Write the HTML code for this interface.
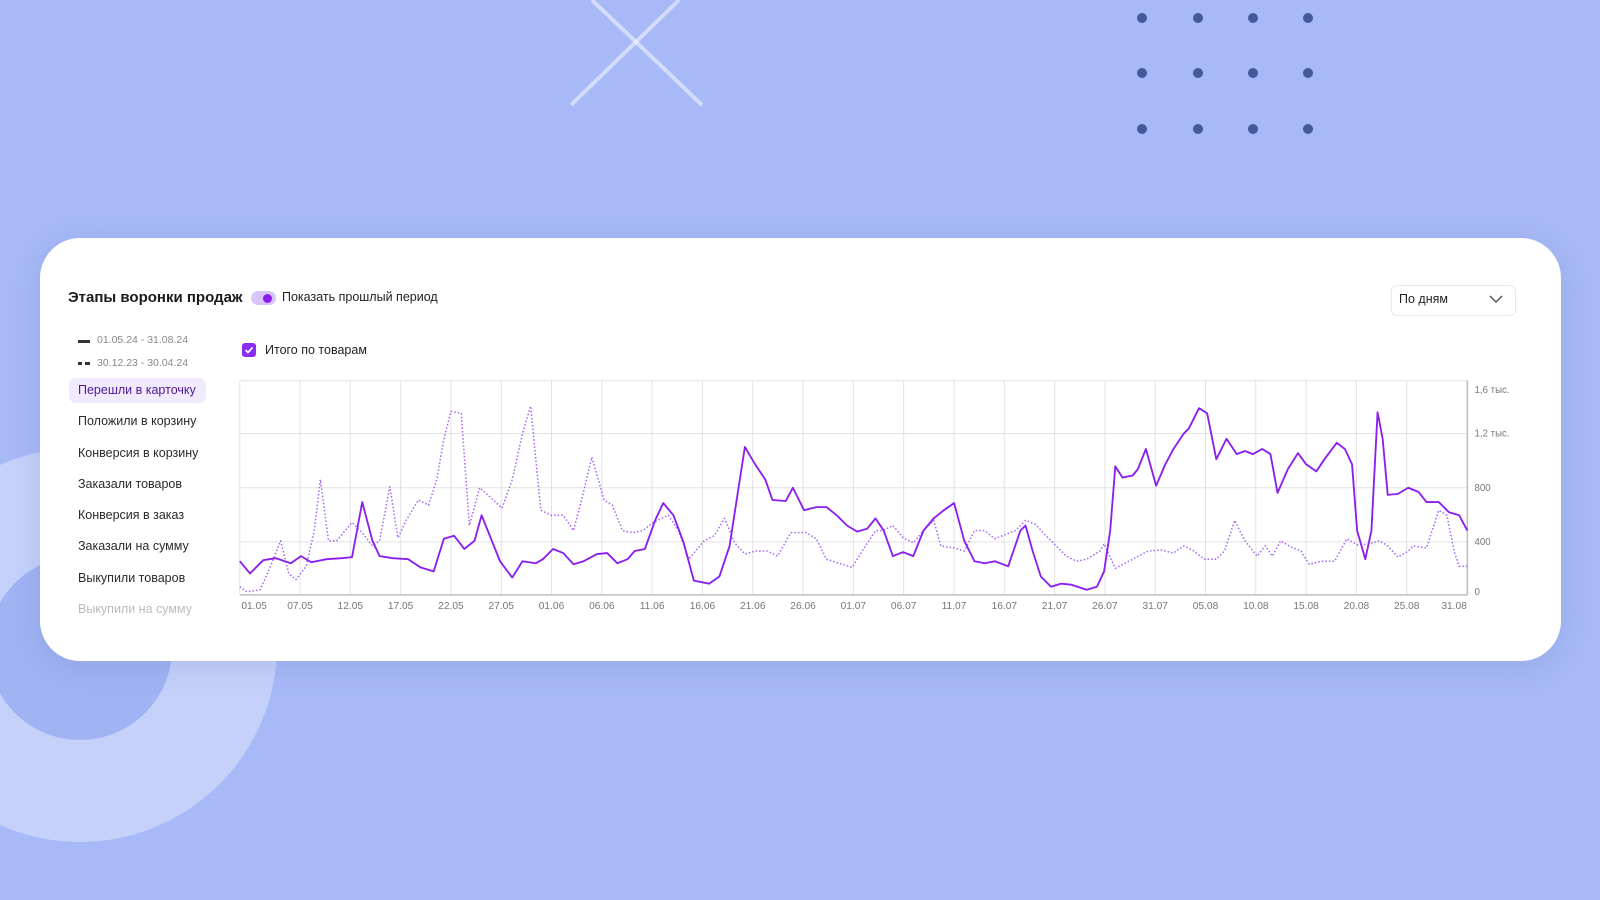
<!DOCTYPE html>
<html><head><meta charset="utf-8">
<style>
html,body{margin:0;padding:0;width:1600px;height:900px;overflow:hidden;background:#a7b9f6;font-family:"Liberation Sans","DejaVu Sans",sans-serif;}
.abs{position:absolute}
.card{position:absolute;left:40px;top:238px;width:1521px;height:423px;background:#fff;border-radius:40px;box-shadow:0 6px 30px rgba(80,100,180,.18);}
.t{position:absolute;white-space:nowrap;color:#222;}
.menu{font-size:12.5px;color:#2a2a2a;left:78px}
</style></head><body>
<svg class="abs" style="left:0;top:0" width="1600" height="900" viewBox="0 0 1600 900">
  <circle cx="80" cy="645" r="197" fill="rgba(255,255,255,0.35)"/>
  <circle cx="80" cy="648" r="92" fill="#a0b3f2"/>
  <line x1="571" y1="105" x2="679" y2="0" stroke="rgba(255,255,255,0.5)" stroke-width="4"/>
  <line x1="592" y1="0" x2="702" y2="105" stroke="rgba(255,255,255,0.5)" stroke-width="4"/>
  <g fill="#44589a">
    <circle cx="1142" cy="18" r="5"/><circle cx="1198" cy="18" r="5"/><circle cx="1253" cy="18" r="5"/><circle cx="1308" cy="18" r="5"/>
    <circle cx="1142" cy="73" r="5"/><circle cx="1198" cy="73" r="5"/><circle cx="1253" cy="73" r="5"/><circle cx="1308" cy="73" r="5"/>
    <circle cx="1142" cy="129" r="5"/><circle cx="1198" cy="129" r="5"/><circle cx="1253" cy="129" r="5"/><circle cx="1308" cy="129" r="5"/>
  </g>
</svg>
<div class="card"></div>
<div class="t" style="left:68px;top:289px;font-size:15px;font-weight:bold;color:#1a1a1a">Этапы воронки продаж</div>
<div class="abs" style="left:251px;top:291px;width:25px;height:14px;border-radius:7px;background:#d9c5fb"></div>
<div class="abs" style="left:263px;top:294px;width:9px;height:9px;border-radius:50%;background:#8a1df0"></div>
<div class="t" style="left:282px;top:290px;font-size:12.5px">Показать прошлый период</div>
<div class="abs" style="left:1391px;top:285px;width:123px;height:29px;border:1px solid #e8e8ee;border-radius:6px;background:#fff"></div>
<div class="t" style="left:1399px;top:292px;font-size:12.5px">По дням</div>
<svg class="abs" style="left:1489px;top:294px" width="14" height="10" viewBox="0 0 14 10"><path d="M1 2 L7 8 L13 2" fill="none" stroke="#555" stroke-width="1.5"/></svg>
<div class="abs" style="left:78px;top:340px;width:12px;height:3px;background:#333"></div>
<div class="t" style="left:97px;top:334px;font-size:10.5px;color:#888">01.05.24 - 31.08.24</div>
<div class="abs" style="left:78px;top:362px;width:4px;height:3px;background:#333"></div>
<div class="abs" style="left:85px;top:362px;width:5px;height:3px;background:#333"></div>
<div class="t" style="left:97px;top:357px;font-size:10.5px;color:#888">30.12.23 - 30.04.24</div>
<div class="abs" style="left:69px;top:378px;width:137px;height:25px;border-radius:7px;background:#f1eafd"></div>
<div class="t menu" style="top:383px;color:#4b1a93">Перешли в карточку</div>
<div class="t menu" style="top:414px">Положили в корзину</div>
<div class="t menu" style="top:446px">Конверсия в корзину</div>
<div class="t menu" style="top:477px">Заказали товаров</div>
<div class="t menu" style="top:508px">Конверсия в заказ</div>
<div class="t menu" style="top:539px">Заказали на сумму</div>
<div class="t menu" style="top:571px">Выкупили товаров</div>
<div class="t menu" style="top:602px;color:#bbb">Выкупили на сумму</div>
<div class="abs" style="left:242px;top:343px;width:14px;height:14px;border-radius:3px;background:#8a2cf5"></div>
<svg class="abs" style="left:242px;top:343px" width="14" height="14" viewBox="0 0 14 14"><path d="M3.5 7 L6 9.5 L10.5 4.5" fill="none" stroke="#fff" stroke-width="1.8"/></svg>
<div class="t" style="left:265px;top:343px;font-size:12.5px">Итого по товарам</div>

<svg class="abs" style="left:0;top:0" width="1600" height="900" viewBox="0 0 1568 882">
 <g stroke="#e2e2e2" stroke-width="1">
  <line x1="235" y1="373" x2="1438" y2="373"/><line x1="235" y1="425" x2="1438" y2="425"/><line x1="235" y1="478" x2="1438" y2="478"/><line x1="235" y1="531" x2="1438" y2="531"/>
  <line x1="235" y1="373" x2="235" y2="583"/>
  <line x1="294" y1="373" x2="294" y2="583"/><line x1="343.3" y1="373" x2="343.3" y2="583"/><line x1="392.6" y1="373" x2="392.6" y2="583"/><line x1="441.9" y1="373" x2="441.9" y2="583"/><line x1="491.2" y1="373" x2="491.2" y2="583"/><line x1="540.5" y1="373" x2="540.5" y2="583"/><line x1="589.8" y1="373" x2="589.8" y2="583"/><line x1="639.1" y1="373" x2="639.1" y2="583"/><line x1="688.4" y1="373" x2="688.4" y2="583"/><line x1="737.7" y1="373" x2="737.7" y2="583"/><line x1="787" y1="373" x2="787" y2="583"/><line x1="836.3" y1="373" x2="836.3" y2="583"/><line x1="885.6" y1="373" x2="885.6" y2="583"/><line x1="934.9" y1="373" x2="934.9" y2="583"/><line x1="984.2" y1="373" x2="984.2" y2="583"/><line x1="1033.5" y1="373" x2="1033.5" y2="583"/><line x1="1082.8" y1="373" x2="1082.8" y2="583"/><line x1="1132.1" y1="373" x2="1132.1" y2="583"/><line x1="1181.4" y1="373" x2="1181.4" y2="583"/><line x1="1230.7" y1="373" x2="1230.7" y2="583"/><line x1="1280" y1="373" x2="1280" y2="583"/><line x1="1329.3" y1="373" x2="1329.3" y2="583"/><line x1="1378.6" y1="373" x2="1378.6" y2="583"/>
 </g>
 <line x1="235" y1="583" x2="1438" y2="583" stroke="#bdbdbd" stroke-width="1.5"/>
 <line x1="1438" y1="373" x2="1438" y2="583" stroke="#bdbdbd" stroke-width="1.5"/>
 <polyline fill="none" stroke="#a768f5" stroke-width="1.5" stroke-dasharray="1.5 2" stroke-linejoin="round" points="235,575 242,580 255,578 263,560 275,530 283,562 290,568 300,555 308,520 314,470 322,530 330,530 345,512 355,522 365,535 372,530 382,477 390,527 398,510 410,490 420,495 428,470 435,430 442,403 452,405 460,515 470,478 478,485 492,498 502,470 512,425 520,398 530,500 540,505 552,505 562,520 570,490 580,448 592,490 600,495 610,520 620,522 630,520 640,512 655,505 665,520 675,548 690,530 700,525 710,508 720,532 730,543 740,540 752,540 762,545 775,522 790,522 800,528 810,548 822,552 835,556 845,540 858,520 865,520 875,515 885,527 895,532 905,520 915,510 922,535 935,537 945,540 955,520 965,520 975,528 985,524 995,520 1005,510 1015,514 1025,525 1035,535 1045,545 1055,550 1065,548 1078,540 1082,533 1093,557 1110,548 1125,540 1138,539 1150,542 1160,535 1170,540 1180,548 1192,548 1200,540 1210,510 1220,530 1232,545 1240,535 1247,545 1255,530 1265,536 1275,540 1283,553 1295,550 1308,550 1320,528 1330,534 1342,533 1352,530 1360,535 1370,546 1380,540 1385,535 1398,537 1410,500 1418,505 1425,540 1430,555 1438,555"/>
 <polyline fill="none" stroke="#8a1df0" stroke-width="1.8" stroke-linejoin="round" points="235,550 245,562 258,549 270,547 285,552 295,545 305,551 320,548 335,547 345,546 355,492 365,530 372,545 385,547 400,548 412,556 425,560 435,528 445,525 455,538 465,530 472,505 480,525 490,550 502,566 512,550 525,552 532,548 542,538 552,542 562,553 572,550 585,543 595,542 605,552 615,548 622,540 632,538 642,510 650,493 660,505 670,532 680,569 695,572 705,565 715,535 725,470 730,438 740,455 750,470 757,490 770,491 777,478 788,500 800,497 810,497 820,505 830,515 840,521 850,518 858,508 866,520 875,545 885,541 895,545 905,520 915,508 925,500 935,493 945,530 955,550 965,552 975,550 988,555 1000,520 1005,515 1012,540 1020,565 1030,575 1040,572 1050,573 1065,578 1075,575 1082,560 1088,520 1093,457 1100,468 1110,466 1115,460 1123,440 1133,476 1142,455 1150,440 1160,425 1165,420 1175,400 1183,405 1192,450 1202,430 1212,445 1220,442 1228,445 1237,440 1245,445 1252,483 1262,460 1272,444 1280,455 1290,462 1298,450 1310,434 1318,440 1325,455 1330,520 1338,548 1344,520 1350,404 1355,430 1360,485 1370,484 1380,478 1390,482 1398,492 1410,492 1420,502 1430,505 1438,520"/>
 <g font-family="Liberation Sans, sans-serif" font-size="10" fill="#777" text-anchor="middle">
  <text x="249" y="597">01.05</text><text x="294" y="597">07.05</text><text x="343.3" y="597">12.05</text><text x="392.6" y="597">17.05</text><text x="441.9" y="597">22.05</text><text x="491.2" y="597">27.05</text><text x="540.5" y="597">01.06</text><text x="589.8" y="597">06.06</text><text x="639.1" y="597">11.06</text><text x="688.4" y="597">16.06</text><text x="737.7" y="597">21.06</text><text x="787" y="597">26.06</text><text x="836.3" y="597">01.07</text><text x="885.6" y="597">06.07</text><text x="934.9" y="597">11.07</text><text x="984.2" y="597">16.07</text><text x="1033.5" y="597">21.07</text><text x="1082.8" y="597">26.07</text><text x="1132.1" y="597">31.07</text><text x="1181.4" y="597">05.08</text><text x="1230.7" y="597">10.08</text><text x="1280" y="597">15.08</text><text x="1329.3" y="597">20.08</text><text x="1378.6" y="597">25.08</text><text x="1425" y="597">31.08</text>
 </g>
 <g font-family="Liberation Sans, sans-serif" font-size="9.5" fill="#777">
  <text x="1445" y="385">1,6 тыс.</text><text x="1445" y="428">1,2 тыс.</text><text x="1445" y="481">800</text><text x="1445" y="534">400</text><text x="1445" y="583">0</text>
 </g>
</svg>
</body></html>
